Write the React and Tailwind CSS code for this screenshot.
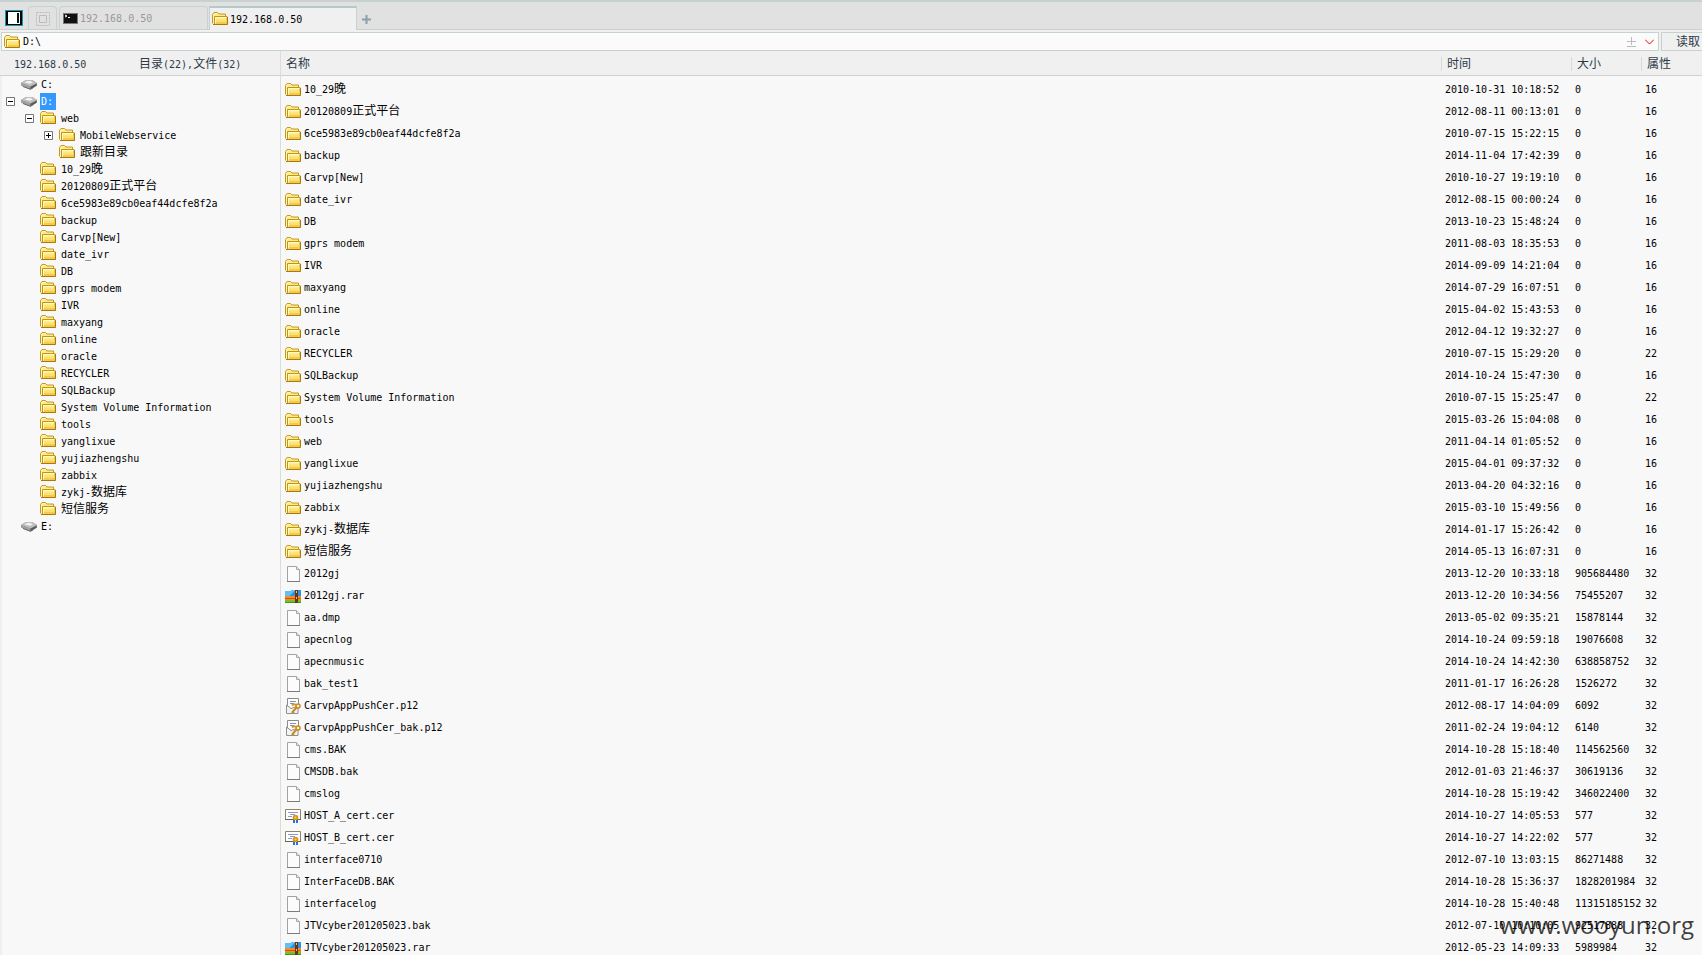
import React, { useState } from 'react';

const HOST = '192.168.0.50';

const folders = [
    ['10_29晚', '2010-10-31 10:18:52', 16],
    ['20120809正式平台', '2012-08-11 00:13:01', 16],
    ['6ce5983e89cb0eaf44dcfe8f2a', '2010-07-15 15:22:15', 16],
    ['backup', '2014-11-04 17:42:39', 16],
    ['Carvp[New]', '2010-10-27 19:19:10', 16],
    ['date_ivr', '2012-08-15 00:00:24', 16],
    ['DB', '2013-10-23 15:48:24', 16],
    ['gprs modem', '2011-08-03 18:35:53', 16],
    ['IVR', '2014-09-09 14:21:04', 16],
    ['maxyang', '2014-07-29 16:07:51', 16],
    ['online', '2015-04-02 15:43:53', 16],
    ['oracle', '2012-04-12 19:32:27', 16],
    ['RECYCLER', '2010-07-15 15:29:20', 22],
    ['SQLBackup', '2014-10-24 15:47:30', 16],
    ['System Volume Information', '2010-07-15 15:25:47', 22],
    ['tools', '2015-03-26 15:04:08', 16],
    ['web', '2011-04-14 01:05:52', 16],
    ['yanglixue', '2015-04-01 09:37:32', 16],
    ['yujiazhengshu', '2013-04-20 04:32:16', 16],
    ['zabbix', '2015-03-10 15:49:56', 16],
    ['zykj-数据库', '2014-01-17 15:26:42', 16],
    ['短信服务', '2014-05-13 16:07:31', 16],
];

const files = [
    ['2012gj', '2013-12-20 10:33:18', '905684480', 'file'],
    ['2012gj.rar', '2013-12-20 10:34:56', '75455207', 'rar'],
    ['aa.dmp', '2013-05-02 09:35:21', '15878144', 'file'],
    ['apecnlog', '2014-10-24 09:59:18', '19076608', 'file'],
    ['apecnmusic', '2014-10-24 14:42:30', '638858752', 'file'],
    ['bak_test1', '2011-01-17 16:26:28', '1526272', 'file'],
    ['CarvpAppPushCer.p12', '2012-08-17 14:04:09', '6092', 'key'],
    ['CarvpAppPushCer_bak.p12', '2011-02-24 19:04:12', '6140', 'key'],
    ['cms.BAK', '2014-10-28 15:18:40', '114562560', 'file'],
    ['CMSDB.bak', '2012-01-03 21:46:37', '30619136', 'file'],
    ['cmslog', '2014-10-28 15:19:42', '346022400', 'file'],
    ['HOST_A_cert.cer', '2014-10-27 14:05:53', '577', 'cert'],
    ['HOST_B_cert.cer', '2014-10-27 14:22:02', '577', 'cert'],
    ['interface0710', '2012-07-10 13:03:15', '86271488', 'file'],
    ['InterFaceDB.BAK', '2014-10-28 15:36:37', '1828201984', 'file'],
    ['interfacelog', '2014-10-28 15:40:48', '11315185152', 'file'],
    ['JTVcyber201205023.bak', '2012-07-10 10:10:05', '92517888', 'file'],
    ['JTVcyber201205023.rar', '2012-05-23 14:09:33', '5989984', 'rar'],
];

const entries = [
    ...folders.map(([name, time, attr]) => ({ name, time, attr, size: '0', icon: 'folder' })),
    ...files.map(([name, time, size, icon]) => ({ name, time, size, icon, attr: 32 })),
];

// web is expanded at the top of the tree, the rest follow in list order
const tree = [
    { name: 'C:', level: 0, icon: 'drive' },
    { name: 'D:', level: 0, icon: 'drive', toggle: 'minus' },
    { name: 'web', level: 1, icon: 'folder', toggle: 'minus' },
    { name: 'MobileWebservice', level: 2, icon: 'folder', toggle: 'plus' },
    { name: '跟新目录', level: 2, icon: 'folder' },
    ...folders.filter(([name]) => name !== 'web').map(([name]) => ({ name, level: 1, icon: 'folder' })),
    { name: 'E:', level: 0, icon: 'drive' },
];

const indents = ['pl-1', 'pl-[23px]', 'pl-[42px]'];

const FolderIcon = () => (
    <svg className="h-4 w-4 shrink-0" viewBox="0 0 16 16">
        <path d="M.5 12.5V3.5L2 1.5h3.5L7 3h6.5v3" fill="#ffe98a" stroke="#c09a20" />
        <path d="M1.5 12V4l1-1.5H5" fill="none" stroke="#fff6b8" />
        <path d="M2.5 5.5h12.5v8H2.5z" fill="#ffee8c" stroke="#c29514" />
        <path d="M3 8.5h11.5V11H3z" fill="#fde070" />
        <path d="M3 11h11.5v2H3z" fill="#f5c94e" />
        <path d="M3.5 12.5v-6h11" fill="none" stroke="#fffbc8" />
        <path d="M1 13.5h14.5V6" fill="none" stroke="#a87a08" />
    </svg>
);

const DriveIcon = () => (
    <svg className="h-4 w-4 shrink-0" viewBox="0 0 16 16">
        <path d="M0 7 5 4h6l5 3v2.5l-6.5 4L0 9.5z" fill="#8a8a8a" />
        <path d="M0 7 5 4h6l5 3-6.5 3.5z" fill="#bdbdbd" />
        <path d="M3.5 6.5 6 5h3.5l2.5 1.4-3 1.3z" fill="#f2f2f2" />
        <path d="M0 7.5 9 10.5v2.7L0 9.5z" fill="#a2a2a2" />
        <path d="m9.5 10.8 6-3v2l-6 3.5z" fill="#5a5a5a" />
        <path d="M2 10.5 9.5 13.3l3-1.8" fill="none" stroke="#666" />
    </svg>
);

const FileIcon = () => (
    <svg className="h-4 w-4 shrink-0" viewBox="0 0 16 16">
        <path d="M2.5.5h9l3 3v12h-12z" fill="#fcfcfc" stroke="#a2a2a2" />
        <path d="M2 15.5h13" stroke="#7c7c7c" />
        <path d="M11.5.5v3h3" fill="#e6e6e6" stroke="#a8a8a8" />
    </svg>
);

const RarIcon = () => (
    <svg className="h-4 w-4 shrink-0" viewBox="0 0 16 16" shapeRendering="crispEdges">
        <path d="M0 3h5l1-1h10v6H0z" fill="#2f94e0" />
        <path d="M0 3h5l1-1h4L4 8H0z" fill="#62c0f5" />
        <path d="M0 8h16v4H0z" fill="#f58b2c" />
        <path d="M0 10h16v1H0z" fill="#c85a10" />
        <path d="M0 12h16v3H0z" fill="#74bf2c" />
        <path d="M0 14h16v1H0z" fill="#4f9418" />
        <path d="M10 2h3v13h-3z" fill="#6b3413" />
        <path d="M11 3h1v2h-1zM11 9h1v2h-1z" fill="#e2c08a" />
    </svg>
);

const KeyIcon = () => (
    <svg className="h-4 w-4 shrink-0" viewBox="0 0 16 16">
        <path d="M2.5.5h11v10h-11z" fill="#fff" stroke="#8b8b8b" />
        <path d="M1.5 7 6 10.5 13 8v7.5H1.5z" fill="#f3f3f3" stroke="#909090" />
        <path d="M5 3.5h6M5 5.5h4" stroke="#7d8ed8" />
        <path d="M7 7.5c2-2 4-1 5 0" fill="none" stroke="#d79a1c" strokeWidth="2" />
        <circle cx="13" cy="8" r="2" fill="#fff3d0" stroke="#c98a22" strokeWidth="1.5" />
        <path d="m11.5 9.5-4 4.5 1.5 1" fill="none" stroke="#c98a22" strokeWidth="2" />
    </svg>
);

const CertIcon = () => (
    <svg className="h-4 w-4 shrink-0" viewBox="0 0 16 16">
        <path d="M.5 1.5h15v10H.5z" fill="#fff" stroke="#8f8468" />
        <path d="M0 11.5h16" stroke="#6e6248" />
        <path d="M3 4.5h10M5 6.5h5M3 8.5h4" stroke="#8e9ad6" />
        <path d="M8 11h2v4H8zM11 11h2v4h-2z" fill="#2e6fd8" />
        <circle cx="10.5" cy="9.5" r="2.8" fill="#dc960f" />
        <circle cx="10.5" cy="9.5" r="1" fill="#f8d060" />
    </svg>
);

const icons = {
    folder: FolderIcon,
    drive: DriveIcon,
    file: FileIcon,
    rar: RarIcon,
    key: KeyIcon,
    cert: CertIcon,
};

const Icon = ({ name }) => {
    const Glyph = icons[name];
    return <Glyph />;
};

// Chinese runs are set two pixels larger so that each glyph fills two columns
const Label = ({ children }) =>
    children.split(/([\u4e00-\u9fff]+)/).map((part, i) =>
        i % 2 ? <span key={i} className="text-[12px]">{part}</span> : part
    );

const Toggle = ({ type }) => (
    <svg className="h-[9px] w-[9px]" viewBox="0 0 9 9">
        <path d="M.5.5h8v8h-8z" fill="#fff" stroke="#777" />
        <path d={type === 'plus' ? 'M2 4.5h5M4.5 2v5' : 'M2 4.5h5'} stroke="#000" />
    </svg>
);

const TabBar = () => (
    <div className="flex h-[30px] items-end border-t-2 border-b border-[#c6d2d0] bg-[#e1e1e1]">
        <button aria-label="Toggle panel" className="mb-[3px] ml-[5px] h-4 w-[18px]">
            <svg className="h-4 w-[18px]" viewBox="0 0 18 16" shapeRendering="crispEdges">
                <path d="M0 0h18v16H0z" fill="#1496b4" />
                <path d="M1 1h16v14H1z" fill="#000" />
                <path d="M3 2h12v12H3z" fill="#fff" />
                <path d="M12 3h2v10h-2z" fill="#111" />
            </svg>
        </button>
        <button aria-label="Home" className="ml-[5px] flex h-[23px] w-[29px] items-center justify-center rounded-t-sm border border-b-0 border-[#c6d2d0] pt-[2px]">
            <svg className="h-[14px] w-[14px]" viewBox="0 0 14 14" fill="none" stroke="#bbb">
                <path d="M.5.5h13v13H.5z" strokeDasharray="2 1" />
                <path d="M3.5 3.5h7v7h-7z" />
            </svg>
        </button>
        <button className="ml-0.5 flex h-[23px] w-[149px] items-center gap-0.5 rounded-t-sm border border-b-0 border-[#c6d2d0] pt-0.5 pl-[3px] text-[#999]">
            <svg className="h-[11px] w-[15px]" viewBox="0 0 15 11">
                <path d="M0 0h15v11H0z" fill="#777" />
                <path d="M1 1h13v9H1z" fill="#111" />
                <path d="m2 2 2 1-2 1M5 4.5h2" fill="none" stroke="#fff" />
            </svg>
            {HOST}
        </button>
        <button className="-mb-px ml-px flex h-6 w-[148px] items-center gap-0.5 border-x border-t-2 border-x-[#c6d2d0] border-t-[#b4cac8] bg-[#f0f0f0] pt-px pl-0.5">
            <FolderIcon />
            {HOST}
        </button>
        <button aria-label="New tab" className="mb-[5px] ml-[5px] h-[9px] w-[9px]">
            <svg className="h-[9px] w-[9px]" viewBox="0 0 9 9">
                <path d="M0 4.5h9M4.5 0v9" stroke="#87a0ab" strokeWidth="2" />
            </svg>
        </button>
    </div>
);

const AddressBar = () => {
    const [path, setPath] = useState('D:\\');

    return (
        <form className="flex gap-0.5 pt-0.5 pl-px" onSubmit={(e) => e.preventDefault()}>
            <div className="flex h-[19px] grow items-center border border-[#c6d2d0] bg-[#fbfbfb] pt-px pl-0.5">
                <FolderIcon />
                <input
                    aria-label="Path"
                    className="min-w-0 grow bg-transparent pl-[3px] outline-none"
                    value={path}
                    onChange={(e) => setPath(e.target.value)}
                />
                <button type="button" aria-label="History" className="flex h-4 items-center gap-[9px] pr-1">
                    <svg className="h-[10px] w-[9px]" viewBox="0 0 9 10">
                        <path d="M0 4.5h9M4.5 0v8M0 9.5h9" stroke="#bbb" />
                    </svg>
                    <svg className="h-[6px] w-[9px]" viewBox="0 0 9 6">
                        <path d="m0 .5 4.5 4.5L9 .5" fill="none" stroke="#e00" />
                    </svg>
                </button>
            </div>
            <button className="h-[19px] w-[41px] overflow-hidden border border-r-0 border-[#c6d2d0] pt-px pl-[14px] text-left text-[12px] leading-[17px] whitespace-nowrap text-[#2d3a48]">
                读取
            </button>
        </form>
    );
};

const Sidebar = () => {
    const [selected, setSelected] = useState('D:');

    return (
        <aside className="flex w-[281px] shrink-0 flex-col border-r border-[#dcdcdc]">
            <div className="flex h-[25px] shrink-0 items-center border-b border-[#d0d0d0] pt-[3px] pl-[14px] text-[#2d3a48]">
                <span className="w-[125px]">{HOST}</span>
                <span className="whitespace-nowrap"><Label>目录(22),文件(32)</Label></span>
            </div>
            <ul className="grow border-l-2 border-[#efefef] bg-[#f8f8f8]">
                {tree.map(({ name, level, icon, toggle }) => (
                    <li key={name} className={`flex h-[17px] items-center ${indents[level]}`}>
                        <span className="flex w-[15px] shrink-0 items-center">
                            {toggle && (
                                <button aria-label={`Toggle ${name}`}>
                                    <Toggle type={toggle} />
                                </button>
                            )}
                        </span>
                        <Icon name={icon} />
                        <button
                            className={`ml-[3px] h-[17px] whitespace-nowrap leading-[17px] ${level === 0 ? 'pr-[3px] pl-px' : 'px-0.5'} ${selected === name ? 'bg-[#3399ff] text-white' : ''}`}
                            onClick={() => setSelected(name)}
                        >
                            <Label>{name}</Label>
                        </button>
                    </li>
                ))}
            </ul>
        </aside>
    );
};

const columns = [
    { title: '名称', width: '', first: true },
    { title: '时间', width: 'w-[130px]' },
    { title: '大小', width: 'w-[70px]' },
    { title: '属性', width: 'w-[61px]' },
];

const FileList = () => (
    <main className="min-w-0 grow overflow-hidden bg-[#f8f8f8]">
        <table className="w-full table-fixed border-separate border-spacing-0">
            <thead className="bg-[#f0f0f0] text-[12px] text-[#2d3a48]">
                <tr>
                    {columns.map(({ title, width, first }) => (
                        <th key={title} className={`h-[25px] border-b border-[#d0d0d0] p-0 pt-[3px] text-left font-normal ${width}`}>
                            <div className={`h-[14px] pl-[5px] leading-[14px] ${first ? '' : 'border-l border-[#d8d8d8]'}`}>{title}</div>
                        </th>
                    ))}
                </tr>
            </thead>
            <tbody className="before:block before:h-[3px]">
                {entries.map(({ name, time, size, attr, icon }) => (
                    <tr key={name} className="whitespace-nowrap">
                        <td className="h-[22px] p-0 pl-1">
                            <div className="flex h-[22px] items-center gap-[3px] leading-[22px]">
                                <Icon name={icon} />
                                <span><Label>{name}</Label></span>
                            </div>
                        </td>
                        <td className="p-0 pl-1">{time}</td>
                        <td className="p-0 pl-1">{size}</td>
                        <td className="p-0 pl-1">{attr}</td>
                    </tr>
                ))}
            </tbody>
        </table>
    </main>
);

const App = () => (
    <div className="relative flex h-screen flex-col overflow-hidden bg-[#f0f0f0] font-['DejaVu_Sans_Mono','Noto_Sans_CJK_SC',monospace] text-[10px] text-black">
        <TabBar />
        <AddressBar />
        <div className="flex min-h-0 grow">
            <Sidebar />
            <FileList />
        </div>
        <div className="pointer-events-none absolute right-2 bottom-3 font-['Open_Sans',sans-serif] text-[24px] text-black/75">
            www.wooyun.org
        </div>
    </div>
);

export default App;
